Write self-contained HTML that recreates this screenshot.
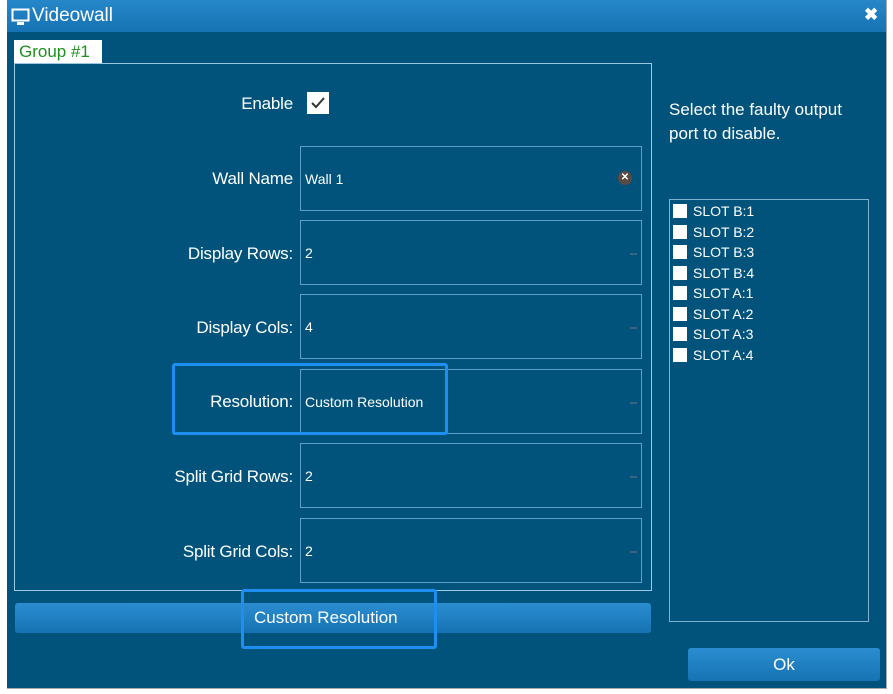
<!DOCTYPE html><html><head><style>
body{margin:0;width:893px;height:694px;background:#fff;position:relative;overflow:hidden;font-family:"Liberation Sans",sans-serif;color:#fff}
.a{position:absolute}
#win{left:7px;top:0;width:879px;height:688px;background:#02537b;border-right:1px solid #aaa;border-bottom:1px solid #aaa}
#tb{left:7px;top:0;width:879px;height:32px;background:linear-gradient(#2687c9,#1673b3)}
.lbl{position:absolute;right:600px;font-size:17px;text-align:right;white-space:nowrap;letter-spacing:-0.2px}
.f{position:absolute;left:300px;width:342px;border:1px solid #5fa0c8;font-size:14px;box-sizing:border-box}
.f span{position:absolute;left:4px;top:50%;transform:translateY(-50%)}
.dd{position:absolute;right:4px;top:50%;width:7px;height:2px;background:#3a6484}
.cb{display:flex;align-items:center;height:20.5px;font-size:14px}
.cb i{display:inline-block;width:14px;height:14px;background:#fff;margin:0 6px 0 3px}
</style></head><body>
<div class="a" id="win"></div>
<div class="a" id="tb"></div>
<svg class="a" style="left:11px;top:8px" width="20" height="18" viewBox="0 0 20 18"><rect x="1.5" y="1.5" width="16" height="11" fill="none" stroke="#fff" stroke-width="2"/><rect x="6" y="14" width="7" height="3" fill="#fff"/></svg>
<div class="a" style="left:32px;top:5px;font-size:19px">Videowall</div>
<div class="a" style="left:864px;top:5px;font-size:17px;font-weight:bold">✖</div>
<div class="a" style="left:14px;top:40px;width:88px;height:24px;background:#fff;color:#1f8f1f;font-size:17px;line-height:24px;text-indent:5px">Group #1</div>
<div class="a" style="left:14px;top:63px;width:636px;height:526px;border:1px solid #9cc8e2"></div>
<div class="lbl" style="top:94px">Enable</div>
<div class="a" style="left:307px;top:92px;width:22px;height:22px;background:#fff"><svg width="22" height="22"><path d="M5 11l4 4 8-9" fill="none" stroke="#333" stroke-width="2"/></svg></div>
<div class="lbl" style="top:169px">Wall Name</div>
<div class="f" style="top:146px;height:65px"><span>Wall 1</span><div class="a" style="right:9px;top:24px;width:14px;height:14px;border-radius:50%;background:#5a4a44;font-size:10px;line-height:14px;text-align:center;font-weight:bold">✕</div></div>
<div class="lbl" style="top:244px">Display Rows:</div>
<div class="f" style="top:220px;height:65px"><span>2</span><div class="dd"></div></div>
<div class="lbl" style="top:318px">Display Cols:</div>
<div class="f" style="top:294px;height:65px"><span>4</span><div class="dd"></div></div>
<div class="lbl" style="top:392px">Resolution:</div>
<div class="f" style="top:369px;height:65px"><span>Custom Resolution</span><div class="dd"></div></div>
<div class="lbl" style="top:467px">Split Grid Rows:</div>
<div class="f" style="top:443px;height:65px"><span>2</span><div class="dd"></div></div>
<div class="lbl" style="top:542px">Split Grid Cols:</div>
<div class="f" style="top:518px;height:65px"><span>2</span><div class="dd"></div></div>
<div class="a" style="left:172px;top:363px;width:270px;height:66px;border:3px solid #1c8ff0;border-radius:3px"></div>
<div class="a" style="left:15px;top:603px;width:636px;height:30px;border-radius:3px;background:linear-gradient(#2a8dd0,#1673b3)"></div>
<div class="a" style="left:254px;top:608px;font-size:17px">Custom Resolution</div>
<div class="a" style="left:241px;top:589px;width:190px;height:54px;border:3px solid #1c8ff0;border-radius:3px"></div>
<div class="a" style="left:669px;top:98px;font-size:17px;line-height:24px;width:200px">Select the faulty output port to disable.</div>
<div class="a" style="left:669px;top:199px;width:200px;height:423px;border:1px solid #7fb0d0;padding-top:1px;box-sizing:border-box">
<div class="cb"><i></i>SLOT B:1</div><div class="cb"><i></i>SLOT B:2</div><div class="cb"><i></i>SLOT B:3</div><div class="cb"><i></i>SLOT B:4</div><div class="cb"><i></i>SLOT A:1</div><div class="cb"><i></i>SLOT A:2</div><div class="cb"><i></i>SLOT A:3</div><div class="cb"><i></i>SLOT A:4</div></div>
<div class="a" style="left:688px;top:648px;width:192px;height:33px;border-radius:3px;background:linear-gradient(#2a8dd0,#1673b3);font-size:17px;line-height:33px;text-align:center">Ok</div>
</body></html>
